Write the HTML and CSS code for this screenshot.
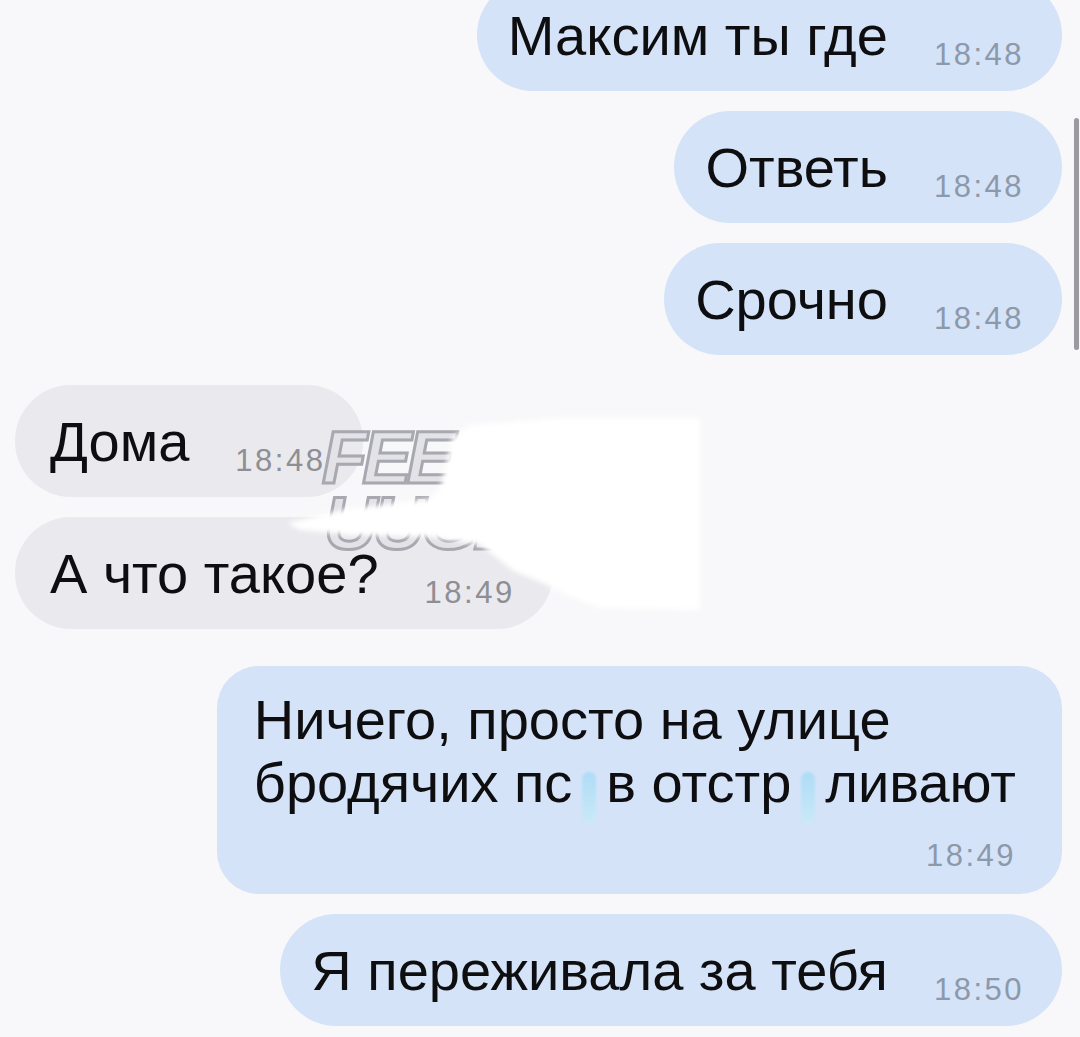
FILE: index.html
```html
<!DOCTYPE html>
<html lang="ru">
<head>
  <meta charset="UTF-8">
  <meta name="viewport" content="width=device-width, initial-scale=1.0">
  <title>Сообщения</title>
  <link rel="stylesheet" href="styles.css">
</head>
<body>
  <div class="chat">
    <div class="bubble out first"><span class="text">Максим ты где</span><span class="time">18:48</span></div>
    <div class="bubble out"><span class="text">Ответь</span><span class="time">18:48</span></div>
    <div class="bubble out"><span class="text">Срочно</span><span class="time">18:48</span></div>

    <div class="bubble in"><span class="text">Дома</span><span class="time">18:48</span></div>
    <div class="bubble in"><span class="text">А что такое?</span><span class="time">18:49</span></div>

    <div class="bubble out multi">
      <p class="text">Ничего, просто на улице<br>бродячих пс<span class="blot"></span>в отстр<span class="blot"></span>ливают</p>
      <div class="time">18:49</div>
    </div>
    <div class="bubble out"><span class="text">Я переживала за тебя</span><span class="time">18:50</span></div>
  </div>

  <!-- watermark + white smear on top of the screenshot -->
  <div class="overlay">
    <span class="mark mark-top">FEE</span>
    <span class="mark mark-bottom">UUGE</span>
    <svg class="smear" width="1080" height="1037" viewBox="0 0 1080 1037">
      <defs>
        <filter id="soft"><feGaussianBlur stdDeviation="2.5"/></filter>
      </defs>
      <path filter="url(#soft)" fill="#ffffff"
        d="M287 523 L347 509 L430 499 L440 488 L446 465 L452 438 L470 425 L560 418 L700 418 L700 610 L600 608 L572 597 L540 582 L515 572 L480 545 L430 537 L350 535 L300 530 Z"/>
    </svg>
  </div>

  <div class="scrollbar"></div>
</body>
</html>
```

FILE: styles.css
```css
body {
  margin: 0;
  position: relative;
  height: 100vh;
  overflow: hidden;
  background-color: #f8f8fa;
  font-family: "Liberation Sans", Arial, sans-serif;
  color: #0e0e10;
}

.chat {
  display: flex;
  flex-direction: column;
  height: 100%;
  padding: 0 18px 0 15px;
  box-sizing: border-box;
}

.bubble {
  padding: 25px 38px 24px 31px;
  border-radius: 56px;
  font-size: 56px;
  line-height: 63px;
  white-space: nowrap;
}

.bubble.out {
  align-self: flex-end;
  background-color: #d4e3f8;
}

.bubble.in {
  align-self: flex-start;
  padding-left: 35px;
  background-color: #e9e9ee;
}

.bubble.first {
  margin-top: -21px;
}

.bubble + .bubble {
  margin-top: 20px;
}

.bubble.out + .bubble.in {
  margin-top: 30px;
}

.bubble.in + .bubble.out {
  margin-top: 37px;
}

.time {
  margin-left: 46px;
  font-size: 31px;
  line-height: 20px;
  letter-spacing: 2.5px;
  vertical-align: -10px;
  color: #8c99aa;
}

.bubble.in .time {
  color: #8e8e95;
}

.bubble.multi {
  padding: 22px 46px 18px 37px;
  border-radius: 42px;
}

.bubble.multi .text {
  margin: 0;
}

.bubble.multi .time {
  margin: 22px 0 0;
  line-height: 40px;
  text-align: right;
}

.blot {
  display: inline-block;
  width: 14px;
  height: 52px;
  margin: 0 10px -10px;
  vertical-align: -12px;
  border-radius: 7px;
  background: linear-gradient(#aedcf6, #cbe9f8);
  filter: blur(1px);
}

.overlay {
  position: absolute;
  top: 0;
  left: 0;
  width: 1080px;
  height: 1037px;
  pointer-events: none;
}

.mark {
  position: absolute;
  font-family: "Liberation Sans Narrow", "Liberation Sans", sans-serif;
  font-weight: 900;
  font-style: italic;
  font-size: 74px;
  line-height: 50px;
  letter-spacing: -5px;
  color: #e2e2e7;
  -webkit-text-stroke: 3px #a8a8b0;
  filter: blur(0.7px);
}

.mark-top {
  left: 322px;
  top: 433px;
}

.mark-bottom {
  left: 324px;
  top: 499px;
}

.smear {
  position: absolute;
  top: 0;
  left: 0;
}

.scrollbar {
  position: absolute;
  top: 118px;
  right: 1px;
  width: 5px;
  height: 232px;
  border-radius: 3px;
  background-color: #9b9b9f;
}
```
